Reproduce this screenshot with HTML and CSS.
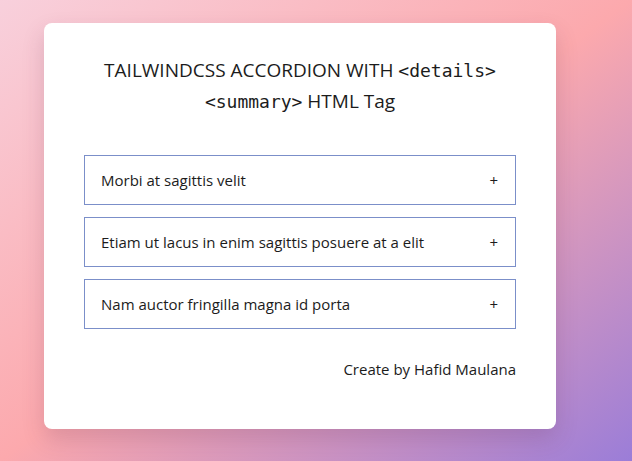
FILE: index.html
```html
<!DOCTYPE html>
<html>
<head>
  <meta charset="utf-8">
  <title>Tailwindcss Accordion</title>
  <link rel="stylesheet" href="styles.css">
</head>
<body>
  <div class="card">
    <h1 class="title">TAILWINDCSS ACCORDION WITH <code>&lt;details&gt;</code> <code>&lt;summary&gt;</code> HTML Tag</h1>

    <div class="accordion">
      <details class="item">
        <summary class="item-head">Morbi at sagittis velit <span class="icon">+</span></summary>
        <p class="item-body">Lorem ipsum dolor sit amet, consectetur adipiscing elit.</p>
      </details>
      <details class="item">
        <summary class="item-head">Etiam ut lacus in enim sagittis posuere at a elit <span class="icon">+</span></summary>
        <p class="item-body">Lorem ipsum dolor sit amet, consectetur adipiscing elit.</p>
      </details>
      <details class="item">
        <summary class="item-head">Nam auctor fringilla magna id porta <span class="icon">+</span></summary>
        <p class="item-body">Lorem ipsum dolor sit amet, consectetur adipiscing elit.</p>
      </details>
    </div>

    <p class="credit">Create by Hafid Maulana</p>
  </div>
</body>
</html>
```

FILE: styles.css
```css
html, body {
  height: 100%;
}

body {
  margin: 0;
  padding: 23px 0 0 44px;
  box-sizing: border-box;
  background: linear-gradient(to bottom right, #f8d0dc 0%, #fca9ad 50%, #9b7dd8 100%);
  font-family: 'Open Sans', 'Noto Sans', sans-serif;
  color: #1c1c1c;
}

.card {
  width: 512px;
  height: 406px;
  box-sizing: border-box;
  padding: 32px 40px 0 40px;
  background: #fff;
  border-radius: 8px;
  box-shadow: 0 10px 22px rgba(90, 40, 80, 0.18);
}

.title {
  margin: 0 0 38px 0;
  font-size: 19px;
  font-weight: 400;
  line-height: 30px;
  text-align: center;
}

.title code {
  font-family: 'DejaVu Sans Mono', monospace;
  font-size: 18px;
}

.accordion {
  display: flex;
  flex-direction: column;
  gap: 12px;
}

.item {
  border: 1px solid #7b8fc9;
}

.item-head {
  list-style: none;
  display: flex;
  align-items: center;
  justify-content: space-between;
  height: 48px;
  padding: 0 17px 0 16px;
  font-size: 15px;
  cursor: pointer;
}

.item-head::-webkit-details-marker {
  display: none;
}

.icon {
  font-size: 15px;
}

.item-body {
  margin: 0;
  padding: 0 16px 16px;
  font-size: 15px;
}

.credit {
  margin: 28px 0 0 0;
  font-size: 15px;
  line-height: 24px;
  text-align: right;
}
```
